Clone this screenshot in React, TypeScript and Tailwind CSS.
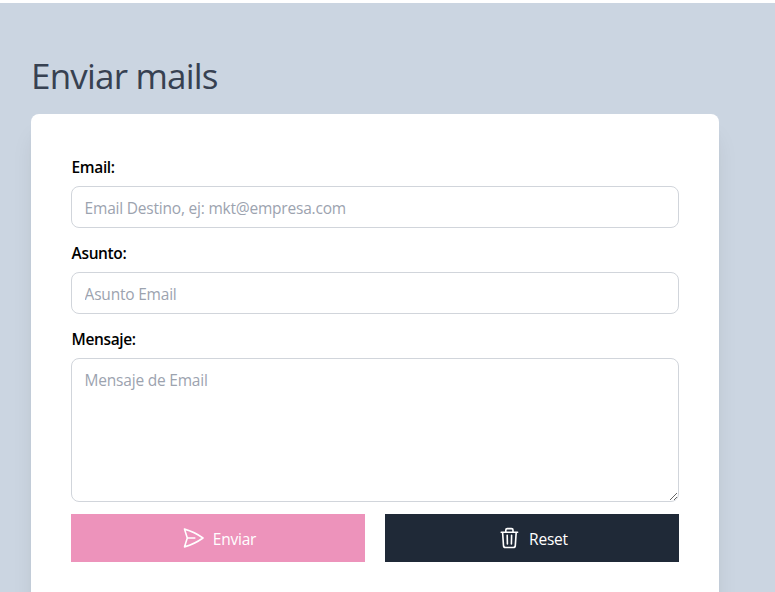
const field =
  'block w-full rounded-lg border border-[#d1d5db] bg-white pl-[12.6px] pr-3 pt-[9px] pb-[7px] text-[15.5px] leading-6 tracking-[-0.21px] placeholder:text-[#9ca3af]';
const label = 'mb-[7px] block pt-px pl-[0.6px] text-[15.5px] leading-6 font-semibold tracking-[-0.38px] text-black';
const button = 'flex h-12 items-center justify-center gap-2 pl-px text-[15.5px] leading-6 tracking-[-0.2px] text-white';

function SendIcon() {
  return (
    <svg className="h-6 w-6" viewBox="0 0 24 24" fill="none" stroke="currentColor" strokeWidth="1.6" strokeLinecap="round" strokeLinejoin="round">
      <path d="M6.3 12 3.5 3.125A59.769 59.769 0 0 1 22 12 59.768 59.768 0 0 1 3.5 20.875L6.3 12Zm0 0h7.5" />
    </svg>
  );
}

function TrashIcon() {
  return (
    <svg className="h-6 w-6" viewBox="0 0 24 24" fill="none" stroke="currentColor" strokeWidth="1.6" strokeLinecap="round" strokeLinejoin="round">
      <path d="M4.2 6.2h16.4M8.8 6V4.1a1.5 1.5 0 0 1 1.5-1.5h4.2a1.5 1.5 0 0 1 1.5 1.5V6M5.6 6.4l.9 13.2a2 2 0 0 0 2 1.9h7.8a2 2 0 0 0 2-1.9l.9-13.2M10.2 9.3l.2 8.6M14.6 9.3l-.2 8.6" />
    </svg>
  );
}

export default function App() {
  return (
    <div className="h-[592px] overflow-hidden bg-white pt-[3px] font-['Open_Sans','Noto_Sans',sans-serif]">
      <main className="h-full bg-[#cbd5e1] pt-[53px] pr-[56px] pl-[31px]">
        <h1 className="mb-[18px] h-10 text-[35px] leading-10 font-normal tracking-[-0.8px] whitespace-nowrap text-[#374151]">Enviar mails</h1>
        <form className="flex h-[600px] flex-col rounded-lg bg-white p-10 shadow-xl" onSubmit={(e) => e.preventDefault()}>
          <div className="mb-3">
            <label className={label} htmlFor="email">Email:</label>
            <input id="email" className={field} placeholder="Email Destino, ej: mkt@empresa.com" />
          </div>
          <div className="mb-3">
            <label className={label} htmlFor="asunto">Asunto:</label>
            <input id="asunto" className={field} placeholder="Asunto Email" />
          </div>
          <div className="mb-3">
            <label className={label} htmlFor="mensaje">Mensaje:</label>
            <textarea id="mensaje" className={`${field} h-36`} placeholder="Mensaje de Email" />
          </div>
          <div className="grid grid-cols-2 gap-5">
            <button className={`${button} bg-[#ed93bb]`}>
              <SendIcon />
              <span className="pt-0.5">Enviar</span>
            </button>
            <button className={`${button} bg-[#1f2937]`}>
              <TrashIcon />
              <span className="pt-0.5">Reset</span>
            </button>
          </div>
        </form>
      </main>
    </div>
  );
}
